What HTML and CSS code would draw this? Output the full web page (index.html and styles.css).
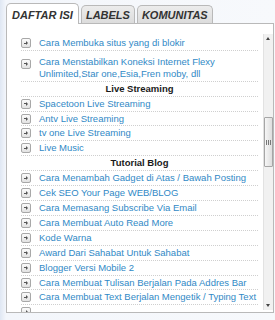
FILE: index.html
```html
<!DOCTYPE html>
<html>
<head>
<meta charset="utf-8">
<link rel="stylesheet" href="styles.css">
</head>
<body>
<div class="widget">
  <div class="tabs">
    <div class="tab active">DAFTAR ISI</div>
    <div class="tab">LABELS</div>
    <div class="tab">KOMUNITAS</div>
  </div>
  <div class="box">
    <ul class="list">
      <li class="item"><span class="ico"></span><a>Cara Membuka situs yang di blokir</a></li>
      <li class="item tall"><span class="ico"></span><a>Cara Menstabilkan Koneksi Internet Flexy Unlimited,Star one,Esia,Fren moby, dll</a></li>
      <li class="head">Live Streaming</li>
      <li class="item"><span class="ico"></span><a>Spacetoon Live Streaming</a></li>
      <li class="item"><span class="ico"></span><a>Antv Live Streaming</a></li>
      <li class="item"><span class="ico"></span><a>tv one Live Streaming</a></li>
      <li class="item"><span class="ico"></span><a>Live Music</a></li>
      <li class="head">Tutorial Blog</li>
      <li class="item"><span class="ico"></span><a>Cara Menambah Gadget di Atas / Bawah Posting</a></li>
      <li class="item"><span class="ico"></span><a>Cek SEO Your Page WEB/BLOG</a></li>
      <li class="item"><span class="ico"></span><a>Cara Memasang Subscribe Via Email</a></li>
      <li class="item"><span class="ico"></span><a>Cara Membuat Auto Read More</a></li>
      <li class="item"><span class="ico"></span><a>Kode Warna</a></li>
      <li class="item"><span class="ico"></span><a>Award Dari Sahabat Untuk Sahabat</a></li>
      <li class="item"><span class="ico"></span><a>Blogger Versi Mobile 2</a></li>
      <li class="item"><span class="ico"></span><a>Cara Membuat Tulisan Berjalan Pada Addres Bar</a></li>
      <li class="item"><span class="ico"></span><a>Cara Membuat Text Berjalan Mengetik / Typing Text</a></li>
      <li class="item"><span class="ico"></span></li>
    </ul>
    <div class="scroll">
      <div class="arrow up"></div>
      <div class="track">
        <div class="thumb"><span class="grip"></span></div>
      </div>
      <div class="arrow down"></div>
    </div>
  </div>
</div>
</body>
</html>
```
FILE: styles.css
```css
html, body {
  margin: 0;
  padding: 0;
}
body {
  width: 275px;
  height: 320px;
  overflow: hidden;
  background: linear-gradient(to right, #dfe7f3 0, #f3f6fb 6px, #f7f9fc 100%);
  font-family: "Liberation Sans", Arial, sans-serif;
}
.widget {
  padding: 3px 1px 0 6px;
}
.tabs {
  display: flex;
  align-items: flex-end;
  gap: 1px;
  position: relative;
  z-index: 1;
}
.tab {
  height: 17px;
  line-height: 18px;
  padding: 0 4px;
  border: 1px solid #b9b9b9;
  border-bottom: none;
  border-radius: 5px 5px 0 0;
  background: linear-gradient(#ececec, #dcdcdc);
  color: #333;
  font-weight: bold;
  font-style: italic;
  font-size: 11px;
  margin-right: 1px;
}
.tab.active {
  height: 20px;
  line-height: 22px;
  padding: 0 5px;
  background: #fff;
  margin-bottom: -1px;
}
.box {
  display: flex;
  height: 288px;
  background: #fff;
  border: 1px solid #b9b9b9;
  overflow: hidden;
}
.list {
  list-style: none;
  margin: 0;
  padding: 12px 0 0 14px;
  width: 237px;
  flex: none;
}
.item {
  display: flex;
  align-items: flex-start;
  gap: 8px;
  min-height: 11.9px;
  padding: 1px 0;
  border-bottom: 1px dotted #cfcfcf;
  font-size: 9.5px;
  line-height: 11.9px;
  color: #3189c6;
}
.item.tall {
  padding-top: 5px;
}
.item.tall .ico {
  margin-top: 3px;
}
.item a {
  color: #3189c6;
}
.ico {
  flex: none;
  width: 8px;
  height: 8px;
  margin-top: 1px;
  border: 1px solid #a8a8a8;
  border-radius: 2px;
  background: linear-gradient(#fbfbfb, #e2e2e2);
  position: relative;
}
.ico::before {
  content: "";
  position: absolute;
  left: 2px;
  top: 3.5px;
  width: 3px;
  height: 1px;
  background: #555;
}
.ico::after {
  content: "";
  position: absolute;
  left: 4px;
  top: 2px;
  width: 0;
  height: 0;
  border-top: 2px solid transparent;
  border-bottom: 2px solid transparent;
  border-left: 2px solid #555;
}
.head {
  text-align: center;
  font-weight: bold;
  font-size: 9.5px;
  line-height: 11.9px;
  padding: 1px 0;
  border-bottom: 1px dotted #cfcfcf;
  color: #1a1a1a;
}
.scroll {
  margin-left: auto;
  margin-top: 10px;
  margin-bottom: 2px;
  width: 9px;
  display: flex;
  flex-direction: column;
  background: #f1f1f1;
  border-left: 1px solid #e2e2e2;
}
.arrow {
  height: 9px;
  position: relative;
}
.arrow::after {
  content: "";
  position: absolute;
  left: 2px;
  border-left: 2.5px solid transparent;
  border-right: 2.5px solid transparent;
}
.arrow.up::after {
  top: 3px;
  border-bottom: 3px solid #444;
}
.arrow.down::after {
  top: 3px;
  border-top: 3px solid #444;
}
.track {
  flex: 1;
  padding-top: 74px;
}
.thumb {
  height: 48px;
  border: 1px solid #a6a6a6;
  border-radius: 1px;
  background: linear-gradient(to right, #f6f6f6, #dedede);
  display: flex;
  align-items: center;
  justify-content: center;
}
.grip {
  width: 5px;
  height: 5px;
  background: repeating-linear-gradient(to right, #777 0 1px, transparent 1px 2px);
}
```
